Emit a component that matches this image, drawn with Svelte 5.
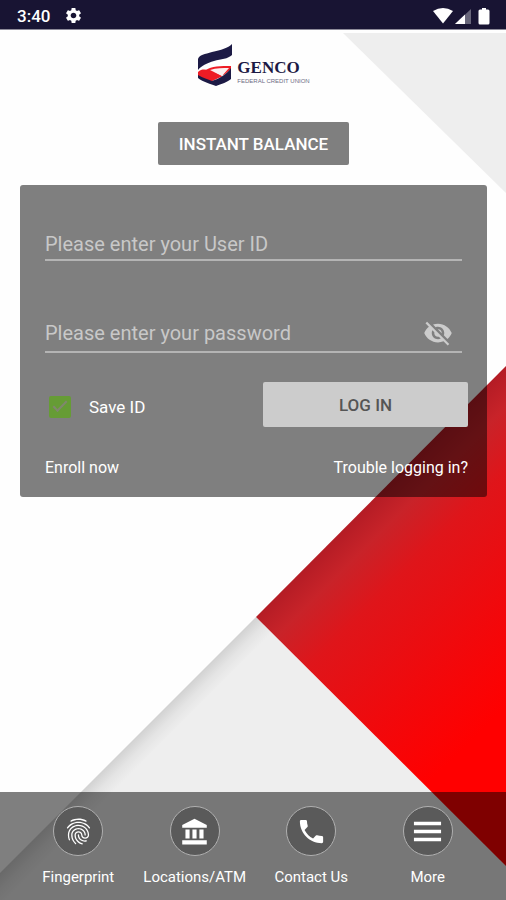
<script>
  let userId = $state('');
  let password = $state('');
  let saveId = $state(true);
  let showPassword = $state(false);

  const tabs = [
    {
      label: 'Fingerprint',
      icon: 'M17.81 4.47c-.08 0-.16-.02-.23-.06C15.66 3.42 14 3 12.01 3c-1.98 0-3.86.47-5.57 1.41-.24.13-.54.04-.68-.2-.13-.24-.04-.55.2-.68C7.82 2.52 9.86 2 12.01 2c2.13 0 3.99.47 6.03 1.52.25.13.34.43.21.67-.09.18-.26.28-.44.28zM3.5 9.72c-.1 0-.2-.03-.29-.09-.23-.16-.28-.47-.12-.7.99-1.4 2.25-2.5 3.75-3.27C9.98 4.04 14 4.03 17.15 5.65c1.5.77 2.76 1.86 3.75 3.25.16.22.11.54-.12.7-.23.16-.54.11-.7-.12-.9-1.26-2.04-2.25-3.39-2.94-2.87-1.47-6.54-1.47-9.4.01-1.36.7-2.5 1.7-3.4 2.96-.08.14-.23.21-.39.21zm6.25 12.07c-.13 0-.26-.05-.35-.15-.87-.87-1.34-1.43-2.01-2.64-.69-1.23-1.05-2.73-1.05-4.34 0-2.97 2.54-5.39 5.66-5.39s5.66 2.42 5.66 5.39c0 .28-.22.5-.5.5s-.5-.22-.5-.5c0-2.42-2.09-4.39-4.66-4.39-2.57 0-4.66 1.97-4.66 4.39 0 1.44.32 2.77.93 3.85.64 1.15 1.08 1.64 1.85 2.42.19.2.19.51 0 .71-.11.1-.24.15-.37.15zm7.17-1.85c-1.19 0-2.24-.3-3.1-.89-1.49-1.01-2.38-2.65-2.38-4.39 0-.28.22-.5.5-.5s.5.22.5.5c0 1.41.72 2.74 1.94 3.56.71.48 1.54.71 2.54.71.24 0 .64-.03 1.04-.1.27-.05.53.13.58.41.05.27-.13.53-.41.58-.57.11-1.07.12-1.21.12zM14.91 22c-.04 0-.09-.01-.13-.02-1.59-.44-2.63-1.03-3.72-2.1-1.4-1.39-2.17-3.24-2.17-5.22 0-1.62 1.38-2.94 3.08-2.94 1.7 0 3.08 1.32 3.08 2.94 0 1.07.93 1.94 2.08 1.94s2.08-.87 2.08-1.94c0-3.77-3.25-6.83-7.25-6.83-2.84 0-5.44 1.58-6.61 4.03-.39.81-.59 1.76-.59 2.8 0 .78.07 2.01.67 3.61.1.26-.03.55-.29.64-.26.1-.55-.04-.64-.29-.49-1.31-.73-2.61-.73-3.96 0-1.2.23-2.29.68-3.24 1.33-2.79 4.28-4.6 7.51-4.6 4.55 0 8.25 3.51 8.25 7.83 0 1.62-1.38 2.94-3.08 2.94s-3.08-1.32-3.08-2.94c0-1.07-.93-1.94-2.08-1.94s-2.08.87-2.08 1.94c0 1.71.66 3.31 1.87 4.51.95.94 1.86 1.46 3.27 1.85.27.07.42.35.35.61-.05.23-.26.38-.47.38z'
    },
    {
      label: 'Locations/ATM',
      icon: 'M5 10.500v7h3.200v-7zM10.400 10.500v7h3.200v-7zM2.500 22h19v-3.200h-19zM15.800 10.500v7h3.200v-7zM12 2.200L2.500 6.900v2.100h19v-2.100z'
    },
    {
      label: 'Contact Us',
      icon: 'M6.62 10.79c1.44 2.83 3.76 5.14 6.59 6.59l2.2-2.2c.27-.27.67-.36 1.02-.24 1.12.37 2.33.57 3.57.57.55 0 1 .45 1 1V20c0 .55-.45 1-1 1-9.39 0-17-7.61-17-17 0-.55.45-1 1-1h3.5c.55 0 1 .45 1 1 0 1.25.2 2.45.57 3.57.11.35.03.74-.25 1.02l-2.2 2.2z'
    },
    {
      label: 'More',
      icon: 'M1.500 4.500h21v2.600h-21zM1.500 10.700h21v2.600h-21zM1.500 16.900h21v2.600h-21z'
    }
  ];
</script>

<div class="screen">
  <svg class="backdrop" viewBox="0 0 506 900" preserveAspectRatio="none" aria-hidden="true">
    <defs>
      <linearGradient id="fold" gradientUnits="userSpaceOnUse" x1="128" y1="745" x2="144" y2="761">
        <stop offset="0" stop-color="#d2d2d2" />
        <stop offset="0.5" stop-color="#e4e4e4" />
        <stop offset="1" stop-color="#eeeeee" />
      </linearGradient>
      <linearGradient id="red" gradientUnits="userSpaceOnUse" x1="381" y1="491" x2="581" y2="691">
        <stop offset="0" stop-color="#b41c25" />
        <stop offset="0.1" stop-color="#c82329" />
        <stop offset="0.26" stop-color="#df151a" />
        <stop offset="0.6" stop-color="#f2080b" />
        <stop offset="0.85" stop-color="#ff0000" />
      </linearGradient>
    </defs>
    <rect width="506" height="900" fill="#fefefe" />
    <path d="M343 33H506V193z" fill="#eeeeee" />
    <path d="M0 873L256 617L506 866V900H0z" fill="url(#fold)" />
    <path d="M256 617L506 366V866z" fill="url(#red)" />
  </svg>

  <header class="status">
    <span class="time">3:40</span>
    <svg class="gear" viewBox="0 0 24 24" aria-hidden="true">
      <path d="M19.14 12.94c.04-.3.06-.61.06-.94 0-.32-.02-.64-.07-.94l2.03-1.58c.18-.14.23-.41.12-.61l-1.92-3.32c-.12-.22-.37-.29-.59-.22l-2.39.96c-.5-.38-1.03-.7-1.62-.94l-.36-2.54c-.04-.24-.24-.41-.48-.41h-3.84c-.24 0-.43.17-.47.41l-.36 2.54c-.59.24-1.13.57-1.62.94l-2.39-.96c-.22-.08-.47 0-.59.22L2.74 8.87c-.12.21-.08.47.12.61l2.03 1.58c-.05.3-.09.63-.09.94s.02.64.07.94l-2.03 1.58c-.18.14-.23.41-.12.61l1.92 3.32c.12.22.37.29.59.22l2.39-.96c.5.38 1.03.7 1.62.94l.36 2.54c.05.24.24.41.48.41h3.84c.24 0 .44-.17.47-.41l.36-2.54c.59-.24 1.13-.56 1.62-.94l2.39.96c.22.08.47 0 .59-.22l1.92-3.32c.12-.22.07-.47-.12-.61l-2.01-1.58zM12 15.6c-1.98 0-3.6-1.62-3.6-3.6s1.62-3.6 3.6-3.6 3.6 1.62 3.6 3.6-1.62 3.6-3.6 3.6z" />
    </svg>
    <svg class="signals" viewBox="0 0 58 18" aria-hidden="true">
      <path d="M0 4Q10-2 20 4L10 16.500z" />
      <path d="M38 2V17H22z" fill-opacity="0.35" />
      <path d="M32 7.500V17H22z" />
      <path d="M49 1h4v1.500h2q1.500 0 1.500 1.500v12q0 1.500-1.500 1.500h-8q-1.500 0-1.500-1.500V4q0-1.500 1.500-1.500h2z" />
    </svg>
  </header>

  <main>
    <div class="logo">
      <svg viewBox="0 0 36 44" aria-hidden="true">
        <path d="M35 0V11C31 15 24 15 17 17C10 19 4 22 1 26V15C2 11 8 10 15 8C24 6 31 4 35 0z" fill="#1c1a45" />
        <path d="M1 28C5 24 9 26 13 26L26 32L13 38L1 33z" fill="#ee1c25" />
        <path d="M9 26C14 22 24 22 34 22V25L27 31z" fill="#ee1c25" />
        <path d="M13 26C19 24 26 24 32 24L25 32z" fill="#fbeff0" />
        <path d="M34 24V35C31 38 24 40 19 42C14 40 6 38 1 34V31C6 34 11 35 15 37C22 35 30 30 34 24z" fill="#1c1a45" />
      </svg>
      <div class="wordmark">
        <span class="name">GENCO</span>
        <span class="sub">FEDERAL CREDIT UNION</span>
      </div>
    </div>

    <button class="balance" type="button">INSTANT BALANCE</button>

    <form class="card" onsubmit={(e) => e.preventDefault()}>
      <div class="field">
        <input type="text" aria-label="User ID" placeholder="Please enter your User ID" bind:value={userId} />
      </div>
      <div class="field password">
        <input
          type={showPassword ? 'text' : 'password'}
          aria-label="Password"
          placeholder="Please enter your password"
          bind:value={password}
        />
        <button class="eye" type="button" aria-label="Show password" onclick={() => (showPassword = !showPassword)}>
          <svg viewBox="0 0 24 24" aria-hidden="true">
            <path d="M12 7c2.760 0 5 2.240 5 5 0 .65-.13 1.260-.36 1.830l2.920 2.920c1.510-1.260 2.700-2.890 3.430-4.750-1.730-4.390-6-7.500-11-7.500-1.400 0-2.740.25-3.980.7l2.160 2.160C10.740 7.130 11.350 7 12 7zM2 4.270l2.280 2.280.46.46C3.080 8.300 1.780 10.020 1 12c1.730 4.390 6 7.500 11 7.500 1.550 0 3.030-.3 4.380-.84l.42.42L19.730 22 21 20.730 3.270 3 2 4.270zM7.530 9.800l1.550 1.550c-.05.21-.08.43-.08.65 0 1.660 1.340 3 3 3 .22 0 .44-.03.65-.08l1.550 1.550c-.67.33-1.410.53-2.200.53-2.760 0-5-2.240-5-5 0-.79.2-1.530.53-2.200zm4.310-.78l3.150 3.150.02-.16c0-1.660-1.340-3-3-3l-.17.01z" />
          </svg>
        </button>
      </div>
      <div class="row">
        <label class="save">
          <input type="checkbox" bind:checked={saveId} />
          Save ID
        </label>
        <button class="login" type="submit">LOG IN</button>
      </div>
      <div class="links">
        <a href="#enroll">Enroll now</a>
        <a href="#trouble">Trouble logging in?</a>
      </div>
    </form>
  </main>

  <nav>
    {#each tabs as tab}
      <button class="tab" type="button">
        <span class="circle">
          <svg viewBox="0 0 24 24" aria-hidden="true"><path d={tab.icon} /></svg>
        </span>
        {tab.label}
      </button>
    {/each}
  </nav>
</div>

<style>
  :global(body) {
    margin: 0;
  }
  .screen {
    position: relative;
    z-index: 0;
    display: flex;
    flex-direction: column;
    min-height: 100vh;
    font-family: Roboto, sans-serif;
    color: #fff;
  }
  .backdrop {
    position: absolute;
    inset: 0;
    z-index: -1;
    width: 100%;
    height: 100%;
  }
  button {
    padding: 0;
    border: none;
    background: none;
    color: inherit;
    font-family: inherit;
    cursor: pointer;
  }

  .status {
    display: flex;
    align-items: center;
    box-sizing: border-box;
    height: 30px;
    padding: 2px 15px 0 17px;
    background: #181433;
    border-bottom: 1px solid #8d8b99;
  }
  .status svg {
    fill: #fff;
  }
  .time {
    font-size: 17px;
    font-weight: 500;
    line-height: 24px;
  }
  .gear {
    width: 19px;
    height: 19px;
    margin-left: 14px;
  }
  .signals {
    width: 58px;
    height: 18px;
    margin-left: auto;
  }

  main {
    flex: 1;
    display: flex;
    flex-direction: column;
    align-items: center;
    padding: 14px 19px 24px 20px;
  }
  .logo {
    display: flex;
    gap: 4px;
  }
  .logo svg {
    width: 36px;
    height: 44px;
  }
  .wordmark {
    display: flex;
    flex-direction: column;
    padding-top: 14px;
  }
  .name {
    font-family: "Liberation Serif", serif;
    font-size: 17px;
    font-weight: 700;
    line-height: 20px;
    color: #1c1a45;
  }
  .sub {
    font-family: "Liberation Sans", sans-serif;
    font-size: 6px;
    line-height: 7px;
    color: #6d6b84;
  }

  .balance {
    height: 43px;
    margin-top: 34px;
    padding: 0 21px;
    border-radius: 2px;
    background: rgba(0, 0, 0, 0.5);
    font-size: 17px;
    font-weight: 500;
  }

  .card {
    box-sizing: border-box;
    width: 100%;
    height: 312px;
    margin-top: 20px;
    padding: 44px 19px 0 25px;
    border-radius: 3px;
    background: rgba(0, 0, 0, 0.5);
  }
  .field {
    display: flex;
    align-items: center;
    height: 30px;
    margin-right: 6px;
    border-bottom: 2px solid #b4b4b4;
  }
  .field input {
    flex: 1;
    min-width: 0;
    padding: 0;
    border: none;
    outline: none;
    background: none;
    color: #fff;
    font-family: inherit;
    font-size: 20px;
    line-height: 24px;
  }
  .field input::placeholder {
    color: #c8c8c8;
    opacity: 1;
  }
  .password {
    height: 36px;
    margin-top: 54px;
  }
  .eye {
    width: 30px;
    height: 30px;
    margin-right: 9px;
  }
  .eye svg {
    display: block;
    fill: #ccc;
  }

  .row {
    display: flex;
    align-items: center;
    justify-content: space-between;
    margin-top: 29px;
  }
  .save {
    display: flex;
    align-items: center;
    gap: 18px;
    padding: 4px 0 0 4px;
    font-size: 17px;
  }
  .save input {
    appearance: none;
    display: grid;
    place-items: center;
    box-sizing: border-box;
    width: 22px;
    height: 22px;
    margin: 0;
    border-radius: 2px;
    border: 2px solid #669c35;
  }
  .save input:checked {
    background: #669c35;
  }
  .save input:checked::before {
    content: "";
    width: 12px;
    height: 5px;
    border-left: 2px solid #80876f;
    border-bottom: 2px solid #80876f;
    transform: translateY(-2px) rotate(-45deg);
  }
  .login {
    width: 205px;
    height: 45px;
    border-radius: 2px;
    background: #ccc;
    color: #555;
    font-size: 17px;
    font-weight: 500;
  }
  .links {
    display: flex;
    justify-content: space-between;
    margin-top: 31px;
    font-size: 16px;
    line-height: 20px;
  }
  .links a {
    color: #fff;
    text-decoration: none;
  }

  nav {
    display: grid;
    grid-template-columns: repeat(4, 1fr);
    box-sizing: border-box;
    height: 108px;
    padding: 14px 20px 0;
    background: rgba(0, 0, 0, 0.5);
  }
  .tab {
    display: flex;
    flex-direction: column;
    align-items: center;
    gap: 11px;
    font-size: 15px;
    line-height: 20px;
  }
  .circle {
    display: grid;
    place-items: center;
    box-sizing: border-box;
    width: 50px;
    height: 50px;
    border: 1px solid #b0b0b0;
    border-radius: 50%;
    background: #5a5a5a;
  }
  .circle svg {
    width: 31px;
    height: 31px;
    fill: #fff;
  }
</style>
